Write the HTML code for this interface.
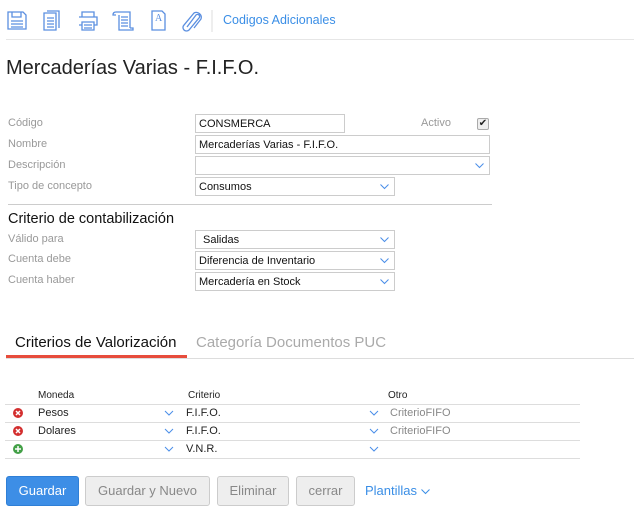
<!DOCTYPE html><html><head><style>
*{box-sizing:border-box;margin:0;padding:0}
body{width:634px;height:517px;background:#fff;font-family:"Liberation Sans",sans-serif;position:relative;overflow:hidden;color:#222}
.a{position:absolute}
.lbl{position:absolute;left:8px;font-size:11px;color:#999}
.inp{position:absolute;border:1px solid #ccc;height:19px;font-size:11px;line-height:18px;padding-left:3px;color:#111;background:#fff}
.chev{position:absolute;right:5px;top:6px;width:9px;height:6px}
.btn{position:absolute;top:476px;height:30px;border:1px solid #ccc;border-radius:3px;background:#eee;color:#888;font-size:13px;line-height:28px;text-align:center}
.td{position:absolute;font-size:11px}
.hl{position:absolute;left:5px;width:575px;height:1px;background:#ddd}
</style></head><body>
<svg class="a" style="left:0;top:0" width="215" height="34" viewBox="0 0 215 34" fill="none" stroke="#5b8fe0" stroke-width="1.3">
<path d="M8 12h15l3 3v14H8z M12 12v5h9v-5 M11 21h12 M11 24h12 M11 27h12"/>
<path d="M47 11h12v17 M44 13h12v17H44z M47 18h7 M47 21h7 M47 24h7 M47 27h7"/>
<path d="M82 17v-5h12v5 M79 17h18v8h-3 M82 25h-3 M82 22h12v8H82z M84 25h8 M84 28h8"/>
<path d="M116 12h14v16 M116 12q-3 0-3 3h3 M130 28h3v2h-14v-15 M121 17h7 M121 20h7 M121 23h7 M121 26h7"/>
<path d="M152 11h10l3 3v16h-13z"/>
<path d="M187 27l9-12a2 2 0 0 1 3 3l-10 12a3.5 3.5 0 0 1-5-5l10-12a5 5 0 0 1 7 6l-7 9"/>
<line x1="212" y1="10" x2="212" y2="32" stroke="#ddd" stroke-width="1"/>
</svg>
<div class="a" style="left:155px;top:13px;font-size:10px;color:#5b8fe0;font-family:'Liberation Serif',serif">A</div>
<div class="a" style="left:223px;top:13px;font-size:12.5px;color:#3a8ee6">Codigos Adicionales</div>
<div class="a" style="left:6px;top:39px;width:628px;height:1px;background:#e6e6e6"></div>
<div class="a" style="left:6px;top:57px;font-size:20px;color:#222">Mercaderías Varias - F.I.F.O.</div>

<div class="lbl" style="top:117px">Código</div>
<div class="inp" style="left:195px;top:114px;width:150px">CONSMERCA</div>
<div class="a" style="left:421px;top:117px;font-size:11px;color:#999">Activo</div>
<div class="a" style="left:477px;top:118px;width:12px;height:12px;border:1px solid #aaa;border-radius:2px;background:#eee;font-size:10px;line-height:10px;text-align:center">✔</div>
<div class="lbl" style="top:138px">Nombre</div>
<div class="inp" style="left:195px;top:135px;width:295px">Mercaderías Varias - F.I.F.O.</div>
<div class="lbl" style="top:159px">Descripción</div>
<div class="inp" style="left:195px;top:156px;width:295px"><svg class="chev" viewBox="0 0 9 6"><path d="M.5 .5l4 4 4-4" fill="none" stroke="#4a8ee8"/></svg></div>
<div class="lbl" style="top:180px">Tipo de concepto</div>
<div class="inp" style="left:195px;top:177px;width:200px">Consumos<svg class="chev" viewBox="0 0 9 6"><path d="M.5 .5l4 4 4-4" fill="none" stroke="#4a8ee8"/></svg></div>
<div class="a" style="left:8px;top:204px;width:484px;height:1px;background:#ccc"></div>
<div class="a" style="left:8px;top:211px;font-size:14.5px;color:#111">Criterio de contabilización</div>
<div class="lbl" style="top:233px">Válido para</div>
<div class="inp" style="left:195px;top:230px;width:200px;padding-left:7px">Salidas<svg class="chev" viewBox="0 0 9 6"><path d="M.5 .5l4 4 4-4" fill="none" stroke="#4a8ee8"/></svg></div>
<div class="lbl" style="top:253px">Cuenta debe</div>
<div class="inp" style="left:195px;top:251px;width:200px">Diferencia de Inventario<svg class="chev" viewBox="0 0 9 6"><path d="M.5 .5l4 4 4-4" fill="none" stroke="#4a8ee8"/></svg></div>
<div class="lbl" style="top:274px">Cuenta haber</div>
<div class="inp" style="left:195px;top:272px;width:200px">Mercadería en Stock<svg class="chev" viewBox="0 0 9 6"><path d="M.5 .5l4 4 4-4" fill="none" stroke="#4a8ee8"/></svg></div>

<div class="a" style="left:15px;top:334px;font-size:15px;color:#111">Criterios de Valorización</div>
<div class="a" style="left:196px;top:334px;font-size:15px;color:#aaa">Categoría Documentos PUC</div>
<div class="a" style="left:6px;top:355px;width:181px;height:3px;background:#e74c3c"></div>
<div class="a" style="left:6px;top:358px;width:628px;height:1px;background:#ddd"></div>

<div class="td" style="left:38px;top:390px;font-size:10px">Moneda</div>
<div class="td" style="left:188px;top:390px;font-size:10px">Criterio</div>
<div class="td" style="left:388px;top:390px;font-size:10px">Otro</div>
<div class="hl" style="top:404px"></div><div class="hl" style="top:422px"></div><div class="hl" style="top:440px"></div><div class="hl" style="top:458px"></div>
<svg class="a" style="left:0;top:404px" width="400" height="54">
<g fill="none" stroke="#4a8ee8"><path d="M165 7l4 4 4-4 M370 7l4 4 4-4 M165 25l4 4 4-4 M370 25l4 4 4-4 M165 43l4 4 4-4 M370 43l4 4 4-4"/></g>
<circle cx="18" cy="9" r="5" fill="#d32f2f"/><path d="M16 7l4 4M20 7l-4 4" stroke="#fff" stroke-width="1.5"/>
<circle cx="18" cy="27" r="5" fill="#d32f2f"/><path d="M16 25l4 4M20 25l-4 4" stroke="#fff" stroke-width="1.5"/>
<circle cx="18" cy="45" r="5" fill="#43a047"/><path d="M15 45h6M18 42v6" stroke="#fff" stroke-width="1.5"/>
</svg>
<div class="td" style="left:38px;top:407px">Pesos</div><div class="td" style="left:186px;top:407px">F.I.F.O.</div><div class="td" style="left:390px;top:407px;color:#888">CriterioFIFO</div>
<div class="td" style="left:38px;top:425px">Dolares</div><div class="td" style="left:186px;top:425px">F.I.F.O.</div><div class="td" style="left:390px;top:425px;color:#888">CriterioFIFO</div>
<div class="td" style="left:186px;top:443px">V.N.R.</div>

<div class="btn" style="left:6px;width:73px;background:#3d8ee6;border-color:#2f7fd6;color:#fff">Guardar</div>
<div class="btn" style="left:85px;width:125px">Guardar y Nuevo</div>
<div class="btn" style="left:217px;width:72px">Eliminar</div>
<div class="btn" style="left:296px;width:59px">cerrar</div>
<div class="a" style="left:365px;top:483px;font-size:13px;color:#3a8ee6">Plantillas <svg width="9" height="6" viewBox="0 0 9 6"><path d="M.5 .5l4 4 4-4" fill="none" stroke="#3a8ee6"/></svg></div>
</body></html>
